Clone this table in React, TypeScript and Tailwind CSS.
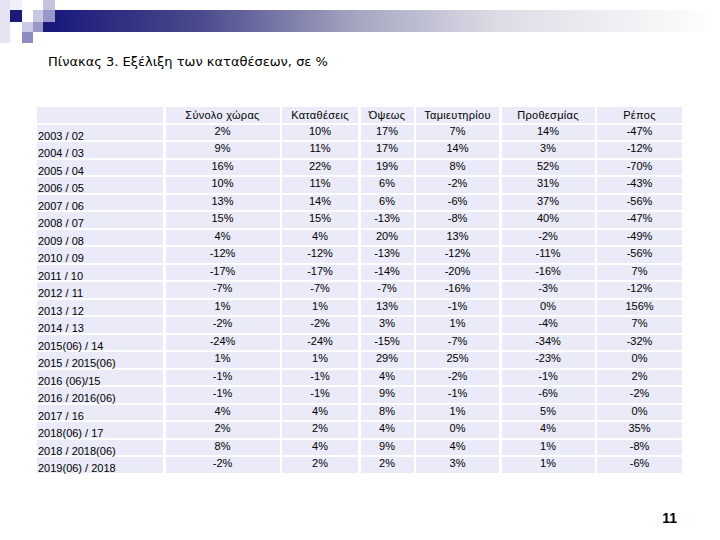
import React from 'react';

// Πίνακας 3 – μεταβολή καταθέσεων ανά έτος
const headers = ['', 'Σύνολο χώρας', 'Καταθέσεις', 'Όψεως', 'Ταμιευτηρίου', 'Προθεσμίας', 'Ρέπος'];

const rows: [string, string[]][] = [
  ['2003 / 02', ['2%', '10%', '17%', '7%', '14%', '-47%']],
  ['2004 / 03', ['9%', '11%', '17%', '14%', '3%', '-12%']],
  ['2005 / 04', ['16%', '22%', '19%', '8%', '52%', '-70%']],
  ['2006 / 05', ['10%', '11%', '6%', '-2%', '31%', '-43%']],
  ['2007 / 06', ['13%', '14%', '6%', '-6%', '37%', '-56%']],
  ['2008 / 07', ['15%', '15%', '-13%', '-8%', '40%', '-47%']],
  ['2009 / 08', ['4%', '4%', '20%', '13%', '-2%', '-49%']],
  ['2010 / 09', ['-12%', '-12%', '-13%', '-12%', '-11%', '-56%']],
  ['2011 / 10', ['-17%', '-17%', '-14%', '-20%', '-16%', '7%']],
  ['2012 / 11', ['-7%', '-7%', '-7%', '-16%', '-3%', '-12%']],
  ['2013 / 12', ['1%', '1%', '13%', '-1%', '0%', '156%']],
  ['2014 / 13', ['-2%', '-2%', '3%', '1%', '-4%', '7%']],
  ['2015(06) / 14', ['-24%', '-24%', '-15%', '-7%', '-34%', '-32%']],
  ['2015 / 2015(06)', ['1%', '1%', '29%', '25%', '-23%', '0%']],
  ['2016 (06)/15', ['-1%', '-1%', '4%', '-2%', '-1%', '2%']],
  ['2016 / 2016(06)', ['-1%', '-1%', '9%', '-1%', '-6%', '-2%']],
  ['2017 / 16', ['4%', '4%', '8%', '1%', '5%', '0%']],
  ['2018(06) / 17', ['2%', '2%', '4%', '0%', '4%', '35%']],
  ['2018 / 2018(06)', ['8%', '4%', '9%', '4%', '1%', '-8%']],
  ['2019(06) / 2018', ['-2%', '2%', '2%', '3%', '1%', '-6%']],
];

function HeaderBanner() {
  return (
    <svg width="720" height="45" viewBox="0 0 720 45" className="block">
      <defs>
        <linearGradient id="bar" x1="0" y1="0" x2="1" y2="0">
          <stop offset="0" stopColor="#1a1a7c" />
          <stop offset="0.22" stopColor="#4a4a8c" />
          <stop offset="0.46" stopColor="#a6a6c2" />
          <stop offset="0.67" stopColor="#dcdce6" />
          <stop offset="1" stopColor="#ffffff" />
        </linearGradient>
      </defs>
      <rect x="0" y="0" width="10" height="43" fill="#e4e4f2" />
      <rect x="10" y="0" width="12" height="10" fill="#f0f0f8" />
      <rect x="55" y="10" width="660" height="22" fill="url(#bar)" />
      <rect x="43" y="22" width="12" height="10" fill="#1a1a7c" />
      <rect x="10" y="10" width="12" height="12" fill="#1a1a7a" />
      <rect x="33" y="10" width="10" height="12" fill="#c8c8e2" />
      <rect x="43" y="0" width="12" height="10" fill="#c4c4de" />
      <rect x="43" y="10" width="12" height="12" fill="#9898c8" />
      <rect x="22" y="22" width="11" height="10" fill="#cacae6" />
      <rect x="33" y="22" width="10" height="10" fill="#9a9ac8" />
      <rect x="22" y="32" width="11" height="11" fill="#8c8cc0" />
    </svg>
  );
}

export default function App() {
  return (
    <div className="w-[720px] h-[540px] bg-white overflow-hidden font-['Liberation_Sans',Arial,sans-serif] text-black">
      <HeaderBanner />

      <div className="pl-[48px] mt-[9px] text-[13px] leading-[16px] font-['DejaVu_Sans',sans-serif]">
        Πίνακας 3. Εξέλιξη των καταθέσεων, σε %
      </div>

      <div className="ml-[37px] mt-[37px] grid grid-cols-[126px_114px_76px_53px_83px_93px_85px] gap-x-[2.5px] gap-y-[2px] text-[11px]">
        {headers.map((h, i) => (
          <div key={'h' + i} className="h-[15.5px] bg-[#eaeaf8] text-center tracking-[0.3px] pt-[1px] leading-[15px]">
            {h}
          </div>
        ))}
        {rows.map(([label, values]) => (
          <React.Fragment key={label}>
            <div className="h-[15.5px] bg-[#eaeaf8] pl-[1px] pt-[4px] leading-[15px] whitespace-nowrap">
              {label}
            </div>
            {values.map((v, j) => (
              <div key={label + j} className="h-[15.5px] bg-[#eaeaf8] text-center leading-[13px]">
                {v}
              </div>
            ))}
          </React.Fragment>
        ))}
      </div>

      <div className="flex justify-end pr-[43px] mt-[38px] text-[14px] leading-[14px] font-bold">
        11
      </div>
    </div>
  );
}
